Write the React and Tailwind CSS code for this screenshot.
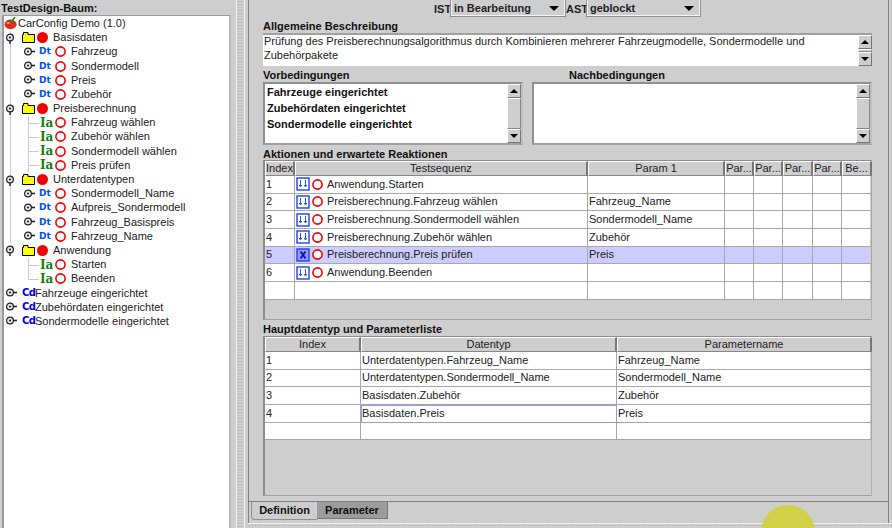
import React from "react";

const dotted = "bg-[radial-gradient(#a8a8a8_1px,transparent_1px)] bg-[length:3px_3px]";

const Tomato = () => (
  <svg width="14" height="14" viewBox="0 0 15 14" className="shrink-0">
    <ellipse cx="7" cy="8.5" rx="6.5" ry="5.2" fill="#e02a1a" />
    <ellipse cx="4.5" cy="7" rx="2" ry="1.2" fill="#f59a80" />
    <path d="M5 4.5 L7.5 6 L12 0.5" fill="none" stroke="#209020" strokeWidth="1.6" />
  </svg>
);

const Folder = () => (
  <svg width="13" height="11" viewBox="0 0 13 11" className="shrink-0">
    <path d="M.5 2.5 H1.5 V.5 H6 V2.5 H12.5 V10.5 H.5 Z" fill="#ffff00" stroke="#000" />
  </svg>
);

const Handle = ({ stem }) => (
  <svg width="12" height="12" viewBox="0 0 12 12" className="shrink-0">
    {stem === "down" ? (
      <path d="M5 8 V12" stroke="#222" strokeWidth="1.4" />
    ) : (
      <path d="M8 5.5 H12" stroke="#222" strokeWidth="1.6" />
    )}
    <circle cx="5" cy="5.5" r="3.4" fill="#e8e8f8" stroke="#222" strokeWidth="1.2" />
    <circle cx="5" cy="5.5" r="1.1" fill="#222" />
  </svg>
);

const RedDot = () => <span className="block w-[11px] h-[11px] rounded-full bg-[#f40000] shrink-0" />;
const RedRing = () => (
  <svg width="11" height="11" viewBox="0 0 11 11" className="shrink-0">
    <circle cx="5.5" cy="5.5" r="4.6" fill="#fff" stroke="#f00000" strokeWidth="1.6" />
  </svg>
);

const treeRows = [
  { kind: "root", text: "CarConfig Demo (1.0)" },
  { kind: "group", text: "Basisdaten" },
  { kind: "dt", text: "Fahrzeug" },
  { kind: "dt", text: "Sondermodell" },
  { kind: "dt", text: "Preis" },
  { kind: "dt", text: "Zubehör" },
  { kind: "group", text: "Preisberechnung" },
  { kind: "ia", text: "Fahrzeug wählen" },
  { kind: "ia", text: "Zubehör wählen" },
  { kind: "ia", text: "Sondermodell wählen" },
  { kind: "ia", text: "Preis prüfen" },
  { kind: "group", text: "Unterdatentypen" },
  { kind: "dt", text: "Sondermodell_Name" },
  { kind: "dt", text: "Aufpreis_Sondermodell" },
  { kind: "dt", text: "Fahrzeug_Basispreis" },
  { kind: "dt", text: "Fahrzeug_Name" },
  { kind: "group", text: "Anwendung", last: true },
  { kind: "ia", text: "Starten", last: true },
  { kind: "ia", text: "Beenden", last: true, end: true },
  { kind: "cd", text: "Fahrzeuge eingerichtet" },
  { kind: "cd", text: "Zubehördaten eingerichtet" },
  { kind: "cd", text: "Sondermodelle eingerichtet" },
];

const TreeRow = ({ row }) => {
  const { kind, text, last, end } = row;
  return (
    <div className="relative flex items-center h-[14.2px] whitespace-nowrap">
      {/* tree guide lines */}
      {(kind === "group" || kind === "dt" || kind === "ia") && !last && (
        <span className="absolute left-[6px] top-0 bottom-0 w-px bg-[#c8c8ec]" />
      )}
      {kind === "ia" && (
        <>
          <span className={`absolute left-[24px] top-0 w-px bg-[#c8c8ec] ${end ? "h-[7px]" : "h-full"}`} />
          <span className="absolute left-[24px] top-[7px] w-[11px] h-px bg-[#c8c8ec]" />
        </>
      )}
      {kind === "root" && (
        <>
          <Tomato />
          <span>{text}</span>
        </>
      )}
      {kind === "group" && (
        <>
          <span className="relative ml-[1px]"><Handle stem="down" /></span>
          <span className="ml-[5px]"><Folder /></span>
          <span className="ml-[2px]"><RedDot /></span>
          <span className="ml-[5px]">{text}</span>
        </>
      )}
      {kind === "dt" && (
        <>
          <span className="relative ml-[19px]"><Handle /></span>
          <span className="ml-[4px] w-[12px] text-[9px] leading-none font-bold text-[#0050f0] font-['DejaVu_Sans',sans-serif]">Dt</span>
          <span className="ml-[4px]"><RedRing /></span>
          <span className="ml-[5px]">{text}</span>
        </>
      )}
      {kind === "ia" && (
        <>
          <span className="relative ml-[36px] w-[14px] text-[12px] leading-none font-bold text-[#108010] font-['DejaVu_Serif',serif] bg-white">Ia</span>
          <span className="ml-[1px]"><RedRing /></span>
          <span className="ml-[5px]">{text}</span>
        </>
      )}
      {kind === "cd" && (
        <>
          <span className="ml-[1px]"><Handle /></span>
          <span className="ml-[5px] w-[13px] text-[10px] leading-none font-bold text-[#0000f0] font-['DejaVu_Sans',sans-serif] tracking-[-0.5px]">Cd</span>
          <span>{text}</span>
        </>
      )}
    </div>
  );
};

const Label = ({ children, className = "" }) => (
  <div className={`font-bold text-[11px] h-[13px] leading-[13px] text-[#111] ${className}`}>{children}</div>
);

const Combo = ({ width, text }) => (
  <div className={`flex items-center justify-between h-[16px] pt-px pl-[2px] pr-[5px] border-r border-b border-l border-[#f4f4f4] outline-1 outline-[#909090] font-bold ${width}`}>
    <span>{text}</span>
    <span className="border-x-[5px] border-x-transparent border-t-[5px] border-t-black" />
  </div>
);

const Arrow = ({ up }) => (
  <div className="flex items-center justify-center h-[14px] border border-t-white border-l-white border-r-[#777] border-b-[#777] bg-[#cecece] shrink-0">
    {up ? (
      <span className="border-x-[4px] border-x-transparent border-b-[4px] border-b-black" />
    ) : (
      <span className="border-x-[4px] border-x-transparent border-t-[4px] border-t-black" />
    )}
  </div>
);

const Scrollbar = () => (
  <div className="flex flex-col w-[14px] h-full shrink-0 bg-[#cecece]">
    <Arrow up />
    <div className="flex-1 border border-[#888] border-l-white border-t-white" />
    <Arrow />
  </div>
);

const seqCols = "grid-cols-[30px_293px_137px_29px_29px_30px_29px_30px]";
const mainCols = "grid-cols-[96px_256px_255px]";

const Header = ({ children }) => (
  <div className="flex items-center justify-center h-[15px] overflow-hidden border-t border-l border-t-white border-l-white border-r-2 border-r-[#777] border-b border-b-[#888] bg-[#cecece] whitespace-nowrap">
    {children}
  </div>
);

const Cell = ({ children, className = "" }) => (
  <div className={`flex items-center h-[17.67px] pl-px border-r border-b border-[#a8a8a8] overflow-hidden whitespace-nowrap ${className}`}>
    {children}
  </div>
);

const StepIcon = ({ check }) => (
  <svg width="14" height="14" viewBox="0 0 14 14" className="shrink-0">
    <rect x="1" y="1" width="12" height="12" fill={check ? "#9a9af0" : "#fff"} stroke="#2040f0" strokeWidth="1.4" />
    {check ? (
      <path d="M4.5 3.5 L9.5 10.5 M9.5 3.5 L4.5 10.5" stroke="#1010d0" strokeWidth="2" />
    ) : (
      <path d="M4.5 3 V9 M3.2 8 L4.5 10 L5.8 8 M9.5 3 V9 M8.2 8 L9.5 10 L10.8 8" fill="none" stroke="#3050e0" />
    )}
  </svg>
);

const steps = [
  ["Anwendung.Starten", ""],
  ["Preisberechnung.Fahrzeug wählen", "Fahrzeug_Name"],
  ["Preisberechnung.Sondermodell wählen", "Sondermodell_Name"],
  ["Preisberechnung.Zubehör wählen", "Zubehör"],
  ["Preisberechnung.Preis prüfen", "Preis"],
  ["Anwendung.Beenden", ""],
];

const params = [
  ["Unterdatentypen.Fahrzeug_Name", "Fahrzeug_Name"],
  ["Unterdatentypen.Sondermodell_Name", "Sondermodell_Name"],
  ["Basisdaten.Zubehör", "Zubehör"],
  ["Basisdaten.Preis", "Preis"],
];

const Panel = ({ children }) => (
  <div className="w-[609px] h-[160px] border border-l-2 border-[#8c8c8c] border-b-[#a0a0a0] border-r-[#b0b0b0] pr-px">
    {children}
  </div>
);

export default function App() {
  return (
    <div className="relative flex w-[892px] h-[528px] overflow-hidden bg-[#cecece] text-[11px] leading-none text-[#222] font-['Liberation_Sans',sans-serif]">
      <aside className="flex flex-col w-[231px] shrink-0 pl-[2px]">
        <div className="h-[15px] -ml-px font-bold text-[#111] leading-[17px]">TestDesign-Baum:</div>
        <div className="flex-1 pt-[0.4px] bg-white border-2 border-t border-[#9a9a9a] border-b-0 border-r-[#b8b8b8]">
          {treeRows.map((row) => (
            <TreeRow key={row.text} row={row} />
          ))}
        </div>
      </aside>

      <div className="flex justify-center w-[17px] shrink-0">
        <div className={`w-[9px] h-full ml-[1px] border-x border-[#eee] ${dotted}`} />
      </div>

      <main className="flex flex-col flex-1 min-w-0">
        <div className="h-[502px] mr-[3px] pl-[14px] border-l border-r border-b border-[#808080]">
          <div className="flex items-start h-[16px] pl-[171px]">
            <span className="font-bold w-[17px] pt-[4px]">IST</span>
            <Combo width="w-[114px]" text="in Bearbeitung" />
            <span className="font-bold w-[22px] pl-px pt-[4px]">AST</span>
            <Combo width="w-[113px]" text="geblockt" />
          </div>

          <Label className="mt-[4px]">Allgemeine Beschreibung</Label>
          <div className="flex w-[609px] h-[33px] border-t-2 border-[#a0a0a0] bg-white">
            <div className="flex-1 pl-px -mt-px leading-[14px]">
              Prüfung des Preisberechnungsalgorithmus durch Kombinieren mehrerer Fahrzeugmodelle, Sondermodelle und
              <br />
              Zubehörpakete
            </div>
            <Scrollbar />
          </div>

          <div className="flex mt-[3px] h-[13px]">
            <Label className="w-[306px]">Vorbedingungen</Label>
            <Label>Nachbedingungen</Label>
          </div>
          <div className="flex gap-[9px] w-[609px] h-[63px]">
            <div className="flex w-[260px] border-2 border-[#909090] border-r-[#c0c0c0] border-b-[#a0a0a0] bg-white">
              <div className="flex-1 pl-[2px] font-bold text-[#111] leading-[16px]">
                <div>Fahrzeuge eingerichtet</div>
                <div>Zubehördaten eingerichtet</div>
                <div>Sondermodelle eingerichtet</div>
              </div>
              <Scrollbar />
            </div>
            <div className="flex w-[340px] border-2 border-[#909090] border-r-[#c0c0c0] border-b-[#a0a0a0] bg-white">
              <div className="flex-1" />
              <Scrollbar />
            </div>
          </div>

          <Label className="mt-[3px] -mb-px">Aktionen und erwartete Reaktionen</Label>
          <Panel>
            <div className={`grid ${seqCols}`}>
              {["Index", "Testsequenz", "Param 1", "Par...", "Par...", "Par...", "Par...", "Be..."].map((h, i) => (
                <Header key={i}>{h}</Header>
              ))}
            </div>
            {[...steps, ["", ""]].map(([name, param], i) => (
              <div key={i} className={`grid ${seqCols} ${i === 4 ? "bg-[#ccccff]" : "bg-white"}`}>
                <Cell>{name && i + 1}</Cell>
                <Cell className="gap-[2px]">
                  {name && (
                    <>
                      <StepIcon check={i === 4} />
                      <RedRing />
                      <span className="ml-[2px]">{name}</span>
                    </>
                  )}
                </Cell>
                <Cell>{param}</Cell>
                <Cell />
                <Cell />
                <Cell />
                <Cell />
                <Cell />
              </div>
            ))}
          </Panel>

          <Label className="mt-[3px]">Hauptdatentyp und Parameterliste</Label>
          <Panel>
            <div className={`grid ${mainCols}`}>
              <Header>Index</Header>
              <Header>Datentyp</Header>
              <Header>Parametername</Header>
            </div>
            {[...params, ["", ""]].map(([type, name], i) => (
              <div key={i} className={`grid ${mainCols} bg-white`}>
                <Cell>{type && i + 1}</Cell>
                <Cell className={i === 3 ? "outline-1 -outline-offset-1 outline-[#9a9ad8]" : ""}>{type}</Cell>
                <Cell>{name}</Cell>
              </div>
            ))}
          </Panel>
        </div>

        <div className="flex items-start h-[21px] mr-[3px] pl-[2px] border-l border-r border-[#808080] font-bold text-[#111]">
          <div className="flex items-center justify-center w-[66px] h-[18px] border-l border-b border-[#909090] rounded-bl-[4px]">Definition</div>
          <div className="flex items-center justify-center w-[71px] h-[17px] bg-[#9c9c9c] border-r border-b border-[#777]">Parameter</div>
        </div>
        <div className={`h-[5px] border-t border-[#eee] ${dotted}`} />
      </main>

      {/* yellow cursor highlight from the screen recording */}
      <div className="absolute left-[761px] top-[505px] w-[54px] h-[54px] rounded-full bg-[#d2d046]" />
    </div>
  );
}
